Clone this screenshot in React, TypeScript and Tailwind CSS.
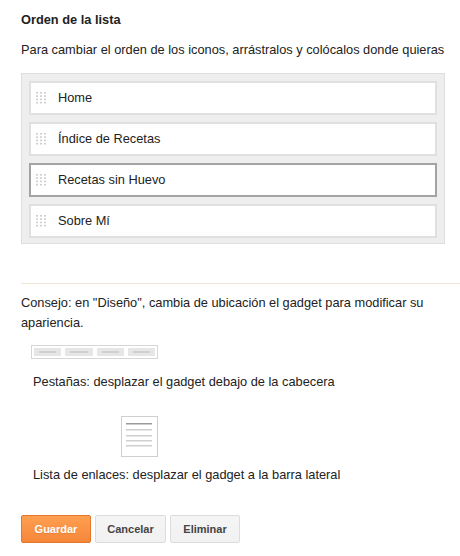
import React from "react";

const items = ["Home", "Índice de Recetas", "Recetas sin Huevo", "Sobre Mí"];

function Grip() {
  const dots = [];
  for (let r = 0; r < 4; r++) {
    for (let c = 0; c < 3; c++) {
      dots.push(<rect key={`${r}-${c}`} x={c * 4} y={r * 3.3} width="2" height="1.6" fill="#cfcfcf" />);
    }
  }
  return (
    <svg width="12" height="13" viewBox="0 0 12 13" className="shrink-0">
      {dots}
    </svg>
  );
}

function TabsIcon() {
  return (
    <div className="flex w-[127px] h-[14px] gap-[4px] border border-[#d6d6d6] px-[2px] py-[2px]">
      {[0, 1, 2, 3].map((i) => (
        <div key={i} className="flex-1 bg-[#e6e6e6] flex items-center px-[5px]">
          <div className="h-[2px] w-full bg-[#d0d0d0]" />
        </div>
      ))}
    </div>
  );
}

function ListIcon() {
  return (
    <svg width="37" height="41" viewBox="0 0 37 41">
      <rect x="0.5" y="0.5" width="36" height="40" fill="#fff" stroke="#cfcfcf" />
      <rect x="5" y="7" width="26" height="1.5" fill="#9a9a9a" />
      <rect x="5" y="13" width="26" height="1.5" fill="#cfcfcf" />
      <rect x="5" y="19" width="26" height="1.5" fill="#cfcfcf" />
      <rect x="5" y="24" width="26" height="1.5" fill="#cfcfcf" />
      <rect x="5" y="29" width="26" height="1.5" fill="#cfcfcf" />
    </svg>
  );
}

export default function App() {
  return (
    <div
      className="w-[460px] h-[556px] bg-white text-[#222] text-[12.8px] overflow-hidden"
      style={{ fontFamily: '"Liberation Sans", Arial, sans-serif' }}
    >
      <div className="pl-[21px] pt-[12px]">
        <h2 className="font-bold leading-[16px]">Orden de la lista</h2>
        <p className="mt-[14px] leading-[16px]">
          Para cambiar el orden de los iconos, arrástralos y colócalos donde quieras
        </p>

        {/* Sortable list */}
        <div className="mt-[15px] w-[424px] bg-[#eeeeee] border border-[#dedede] pt-[7px] pb-[5px] px-[7px] flex flex-col gap-[7px]">
          {items.map((item, i) => (
            <div
              key={item}
              className={`h-[34px] bg-white border-2 flex items-center pl-[5px] gap-[10px] ${
                i === 2 ? "border-[#a3a3a3]" : "border-[#e0e0e0]"
              }`}
            >
              <Grip />
              <span className="leading-[16px]">{item}</span>
            </div>
          ))}
        </div>
      </div>

      <div className="ml-[21px] mt-[39px] h-px bg-[#eee5d3]" />

      <div className="pl-[21px]">
        <p className="mt-[9px] leading-[20px] pr-[10px]">
          Consejo: en "Diseño", cambia de ubicación el gadget para modificar su apariencia.
        </p>

        <div className="mt-[12px] ml-[10px]">
          <TabsIcon />
        </div>
        <p className="mt-[13px] ml-[12px] leading-[20px]">Pestañas: desplazar el gadget debajo de la cabecera</p>

        <div className="mt-[24px] ml-[100px]">
          <ListIcon />
        </div>
        <p className="mt-[8px] ml-[12px] leading-[20px]">Lista de enlaces: desplazar el gadget a la barra lateral</p>

        <div className="mt-[30px] flex gap-[4px]">
          <button className="w-[70px] h-[28px] rounded-[2px] border border-[#e3782c] bg-gradient-to-b from-[#ff9f50] to-[#f5863a] text-white text-[11px] font-bold [text-shadow:0_1px_0_rgba(0,0,0,0.1)]">
            Guardar
          </button>
          <button className="w-[71px] h-[28px] rounded-[2px] border border-[#dcdcdc] bg-gradient-to-b from-[#f5f5f5] to-[#f1f1f1] text-[#444] text-[11px] font-bold">
            Cancelar
          </button>
          <button className="w-[70px] h-[28px] rounded-[2px] border border-[#dcdcdc] bg-gradient-to-b from-[#f5f5f5] to-[#f1f1f1] text-[#444] text-[11px] font-bold">
            Eliminar
          </button>
        </div>
      </div>
    </div>
  );
}
